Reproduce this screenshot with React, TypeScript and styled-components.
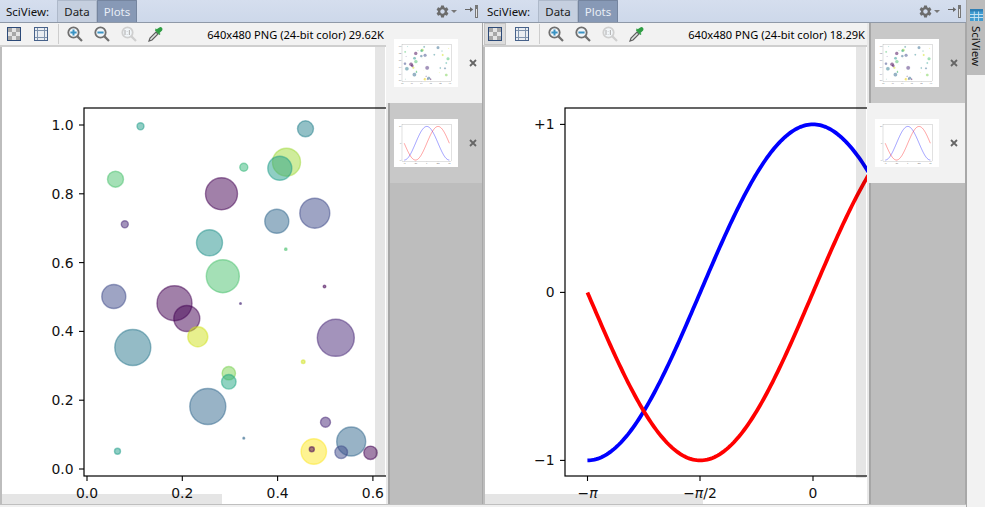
import styled, { createGlobalStyle } from "styled-components";
import { MdSettings } from "react-icons/md";

const GlobalStyle = createGlobalStyle`
  html, body {
    margin: 0;
    height: 100%;
    overflow: hidden;
    background: #f2f2f2;
  }
`;

const Page = styled.div`
  display: flex;
  width: 985px;
  height: 507px;
  overflow: hidden;
  font-family: "Noto Sans", "Open Sans", sans-serif;
  font-size: 11.5px;
  color: #111;
`;

const Panel = styled.section`
  display: flex;
  flex-direction: column;
  width: 483px;
  height: 507px;
  flex-shrink: 0;
`;

const Header = styled.header<{ $start: number }>`
  display: flex;
  align-items: stretch;
  height: 22px;
  padding-left: ${(props) => props.$start}px;
  background: linear-gradient(#d5deee, #cdd8ea);
  border-bottom: 1px solid #8f99a8;
`;

const HeaderLabel = styled.span`
  align-self: center;
  width: 51px;
  font-size: 11.5px;
  white-space: nowrap;
`;

const Tab = styled.div<{ $active?: boolean }>`
  display: flex;
  align-items: center;
  justify-content: center;
  width: 38px;
  color: ${(props) => (props.$active ? "#e9eef6" : "#1c1c1c")};
  background: ${(props) => (props.$active ? "#8799b6" : "#c5cfdf")};
  border: 1px solid ${(props) => (props.$active ? "#75859f" : "#aeb9ca")};
  border-bottom: none;
  border-radius: 1px 1px 0 0;
`;

const HeaderTools = styled.div`
  display: flex;
  align-items: center;
  gap: 8px;
  margin-left: auto;
  padding-right: 5px;
`;

const GearButton = styled.div`
  display: flex;
  align-items: center;
  gap: 1px;
  color: #6c6c6c;
`;

const Caret = styled.span`
  width: 0;
  height: 0;
  border-left: 3px solid transparent;
  border-right: 3px solid transparent;
  border-top: 3px solid #777;
`;

const Body = styled.div`
  display: flex;
  flex: 1;
  min-height: 0;
`;

const ViewColumn = styled.div`
  display: flex;
  flex-direction: column;
  flex: 1;
  min-width: 0;
`;

const Toolbar = styled.div<{ $start: number }>`
  display: flex;
  align-items: center;
  gap: 5px;
  height: 22px;
  padding-left: ${(props) => props.$start}px;
  padding-right: 2px;
  background: #f2f2f2;
  border-bottom: 2px solid #cfcfcf;
`;

const ToolButton = styled.div<{ $active?: boolean }>`
  display: flex;
  align-items: center;
  justify-content: center;
  width: 20px;
  height: 20px;
  background: ${(props) => (props.$active ? "#dcdcdc" : "transparent")};
  border: 1px solid ${(props) => (props.$active ? "#c4c4c4" : "transparent")};
`;

const ToolDivider = styled.span`
  width: 1px;
  height: 20px;
  margin: 0 0.5px;
  background: #cdcdcd;
`;

const ImageInfo = styled.span`
  margin-left: auto;
  font-size: 11.1px;
  color: #000;
  white-space: nowrap;
`;

const Viewer = styled.div`
  position: relative;
  flex: 1;
  min-height: 0;
  overflow: hidden;
  background: #fff;
  border-left: 2px solid #bdbdbd;
`;

const PlotFrame = styled.div<{ $left: number }>`
  margin-top: 2.5px;
  margin-left: ${(props) => props.$left}px;
`;

const VerticalScroll = styled.div<{ $height: number }>`
  position: absolute;
  top: 0;
  right: 1px;
  width: 10px;
  height: ${(props) => props.$height}px;
  background: rgba(0, 0, 0, 0.1);
`;

const HorizontalScroll = styled.div<{ $width: number }>`
  position: absolute;
  left: 0;
  bottom: 0;
  width: ${(props) => props.$width}px;
  height: 10px;
  background: rgba(0, 0, 0, 0.1);
`;

const ThumbColumn = styled.aside<{ $width: number }>`
  display: flex;
  flex-direction: column;
  width: ${(props) => props.$width}px;
  flex-shrink: 0;
  border-right: 1px solid #a8a8a8;
  box-sizing: border-box;
`;

const ThumbRow = styled.div<{ $active?: boolean }>`
  display: flex;
  align-items: center;
  gap: 11px;
  height: 80px;
  box-sizing: border-box;
  padding-left: ${(props) => (props.$active ? 8 : 6)}px;
  background: ${(props) => (props.$active ? "#f2f2f2" : "#c8c8c8")};
  border-left: ${(props) => (props.$active ? "none" : "2px solid #e8e8e8")};
  box-shadow: ${(props) => (props.$active ? "none" : "inset 2px 0 #a6a6a6")};
`;

const ThumbFiller = styled.div`
  flex: 1;
  background: #bdbdbd;
  border-left: 2px solid #e8e8e8;
  box-shadow: inset 2px 0 #a6a6a6;
`;

const ThumbImage = styled.div`
  display: flex;
  width: 64px;
  height: 48px;
  background: #fff;
`;

const BottomEdge = styled.div`
  height: 2px;
  background: #f0f0f0;
  border-top: 1px solid #bfbfbf;
`;

const SideStripe = styled.aside`
  display: flex;
  flex-direction: column;
  flex: 1;
  background: #f2f2f2;
  border-left: 1px solid #a8a8a8;
`;

const StripeButton = styled.div`
  display: flex;
  flex-direction: column;
  align-items: center;
  gap: 5px;
  height: 75px;
  padding-top: 9px;
  box-sizing: border-box;
  background: #bcbcbc;
`;

const StripeLabel = styled.span`
  writing-mode: vertical-rl;
  font-size: 11.5px;
  line-height: 14px;
`;

const PlotSvg = styled.svg`
  display: block;
  overflow: hidden;
  font-family: "DejaVu Sans", sans-serif;
  font-size: 13.9px;
`;

type Bubble = [number, number, number, string];

const bubbles: Bubble[] = [
  [136.5, 76.2, 3.5, "#1f9e89"],
  [301.5, 78.8, 8, "#26828e"],
  [282.5, 112.2, 14, "#a0da39"],
  [275.8, 118.2, 12, "#1f9e89"],
  [239.8, 117.2, 4, "#35b779"],
  [111.5, 129.2, 8, "#4ac16d"],
  [217.5, 143.8, 16, "#440154"],
  [310.8, 163.2, 15, "#3e4989"],
  [272.8, 171.2, 12, "#31688e"],
  [120.8, 174.2, 3.5, "#482878"],
  [205.5, 192.8, 13, "#21918c"],
  [281.8, 199.2, 1.2, "#4ac16d"],
  [218.8, 226.2, 16.5, "#4ac16d"],
  [320.5, 236.5, 1.3, "#440154"],
  [109.8, 246.5, 12, "#3e4989"],
  [170.5, 253.2, 17.5, "#440154"],
  [182.8, 268.5, 13, "#440154"],
  [193.8, 286.8, 10, "#d0e11c"],
  [236.5, 253.5, 0.9, "#482878"],
  [331.8, 287.8, 18.5, "#482878"],
  [128.8, 297.5, 18, "#2a788e"],
  [299.2, 311.8, 1.8, "#d0e11c"],
  [224.8, 323.2, 6.7, "#7ad151"],
  [224.8, 331.8, 7.3, "#22a884"],
  [203.8, 356.5, 18, "#31688e"],
  [321.5, 372.2, 5, "#482878"],
  [239.8, 388.2, 0.9, "#31688e"],
  [347.2, 391.5, 14.5, "#31688e"],
  [113.5, 401.2, 3, "#1f9e89"],
  [309.8, 401.5, 12.7, "#fde725"],
  [307.8, 399.2, 2.5, "#440154"],
  [337.2, 402.2, 6.3, "#3e4989"],
  [366.5, 402.8, 6.7, "#440154"],
  // off to the right of the viewer, only the thumbnails show these
  [440, 87, 14, "#31688e"],
  [480, 120, 5, "#1f9e89"],
  [547, 93, 4, "#d0e11c"],
  [403, 157, 8, "#26828e"],
  [487, 160, 9, "#d0e11c"],
  [540, 197, 15, "#4ac16d"],
  [523, 240, 8, "#1f9e89"],
  [463, 290, 7, "#26828e"],
  [510, 293, 9, "#31688e"],
  [523, 360, 13, "#7ad151"],
  [453, 337, 3, "#d0e11c"],
];

const AXES = { left: 80, right: 576, top: 58, bottom: 426 };

const Spines = () => (
  <rect
    x={AXES.left}
    y={AXES.top}
    width={AXES.right - AXES.left}
    height={AXES.bottom - AXES.top}
    fill="none"
    stroke="#000"
    strokeWidth={1.2}
  />
);

const XTick = ({ x, children }: { x: number; children: React.ReactNode }) => (
  <>
    <line x1={x} x2={x} y1={AXES.bottom} y2={AXES.bottom + 5} stroke="#000" strokeWidth={1.1} />
    <text x={x} y={447.5} textAnchor="middle" fill="#111">
      {children}
    </text>
  </>
);

const YTick = ({ y, children }: { y: number; children: React.ReactNode }) => (
  <>
    <line x1={AXES.left - 5} x2={AXES.left} y1={y} y2={y} stroke="#000" strokeWidth={1.1} />
    <text x={69.5} y={y + 5} textAnchor="end" fill="#111">
      {children}
    </text>
  </>
);

const ScatterPlot = ({ width = 640 }: { width?: number }) => (
  <PlotSvg width={width} height={(width * 3) / 4} viewBox="0 0 640 480">
    {bubbles.map(([x, y, r, color]) => (
      <circle
        key={`${x}-${y}`}
        cx={x}
        cy={y}
        r={r}
        fill={color}
        fillOpacity={0.5}
        stroke={color}
        strokeOpacity={0.5}
        strokeWidth={1.4}
      />
    ))}
    <Spines />
    {[0, 0.2, 0.4, 0.6, 0.8, 1].map((v) => (
      <XTick key={v} x={83 + v * 476.5}>
        {v.toFixed(1)}
      </XTick>
    ))}
    {[0, 0.2, 0.4, 0.6, 0.8, 1].map((v) => (
      <YTick key={v} y={419 - v * 344}>
        {v.toFixed(1)}
      </YTick>
    ))}
  </PlotSvg>
);

const curvePath = (fn: (v: number) => number) => {
  const points: string[] = [];
  for (let i = 0; i <= 256; i++) {
    const v = -Math.PI + (i / 256) * 2 * Math.PI;
    points.push(`${(328 + v * 71.8).toFixed(2)},${(242.4 - fn(v) * 168).toFixed(2)}`);
  }
  return `M${points.join("L")}`;
};

const Pi = () => <tspan fontStyle="italic">π</tspan>;

const CurvePlot = ({ width = 640 }: { width?: number }) => (
  <PlotSvg width={width} height={(width * 3) / 4} viewBox="0 0 640 480">
    <path d={curvePath(Math.cos)} fill="none" stroke="#0000ff" strokeWidth={3.8} />
    <path d={curvePath(Math.sin)} fill="none" stroke="#ff0000" strokeWidth={3.8} />
    <Spines />
    <XTick x={102.5}>
      −<Pi />
    </XTick>
    <XTick x={215}>
      −<Pi />/2
    </XTick>
    <XTick x={328}>0</XTick>
    <XTick x={440.8}>
      +<Pi />/2
    </XTick>
    <XTick x={553.5}>
      +<Pi />
    </XTick>
    <YTick y={74.4}>+1</YTick>
    <YTick y={242.4}>0</YTick>
    <YTick y={410.4}>−1</YTick>
  </PlotSvg>
);

const CheckerIcon = () => (
  <svg width="14" height="14" viewBox="0 0 14 14">
    <rect width="14" height="14" fill="#e4e4e4" />
    <path d="M1 1h4v4H1zM9 1h4v4H9zM5 5h4v4H5zM1 9h4v4H1zM9 9h4v4H9z" fill="#a8a8a8" />
    <rect x="0.5" y="0.5" width="13" height="13" fill="none" stroke="#2c4a78" />
  </svg>
);

const FrameIcon = () => (
  <svg width="14" height="14" viewBox="0 0 14 14">
    <rect width="14" height="14" fill="#e9edf2" />
    <path d="M3.5 1v12M10.5 1v12M1 3.5h12M1 10.5h12" stroke="#7f93ad" fill="none" />
    <rect x="0.5" y="0.5" width="13" height="13" fill="none" stroke="#46618a" />
  </svg>
);

const LensIcon = ({ kind }: { kind: "in" | "out" | "actual" }) => {
  const muted = kind === "actual";
  const ring = muted ? "#cfcfcf" : "#6f6f6f";
  return (
    <svg width="16" height="16" viewBox="0 0 16 16">
      <circle cx="6.5" cy="6.5" r="5.2" fill="#f2f6f9" stroke={ring} strokeWidth="1.8" />
      <path d="M10.4 10.4L15 15" stroke={ring} strokeWidth="2.2" />
      {kind === "in" && <path d="M6.5 3.4v6.2M3.4 6.5h6.2" stroke="#3a93c4" strokeWidth="2" />}
      {kind === "out" && <path d="M3.4 6.5h6.2" stroke="#3a93c4" strokeWidth="2" />}
      {muted && <path d="M4 4v5M6.2 5v.5M6.2 8v.5M8.4 4v5" stroke="#b8b8b8" strokeWidth="1.2" />}
    </svg>
  );
};

const DropperIcon = () => (
  <svg width="16" height="16" viewBox="0 0 16 16">
    <path d="M1 15l1-3 6-6 2 2-6 6z" fill="#dfe5e3" stroke="#5f5f5f" strokeWidth="1.2" />
    <path d="M7 4.5l4.5 4.5 1-1-1-1 2.6-2.6a2 2 0 0 0-2.8-2.8L8.7 3.2l-1-1z" fill="#2f9e44" />
  </svg>
);

const PinIcon = () => (
  <svg width="13" height="13" viewBox="0 0 13 13">
    <path d="M0 4.5h6.5" stroke="#666" strokeWidth="1" />
    <path d="M5 2l3.2 2.5L5 7z" fill="#666" />
    <rect x="10" y="0" width="3" height="13" fill="#777" />
    <rect x="11" y="4" width="1" height="8" fill="#e4e4e4" />
  </svg>
);

const CloseIcon = () => (
  <svg width="8" height="8" viewBox="0 0 8 8">
    <path d="M1 1l6 6M7 1l-6 6" stroke="#666" strokeWidth="1.8" />
  </svg>
);

const SciViewIcon = () => (
  <svg width="13" height="12" viewBox="0 0 13 12">
    <rect width="13" height="12" fill="#3f9bd0" />
    <rect width="13" height="2.5" fill="#2f7fb4" />
    <path d="M4.3 2.5v9.5M8.6 2.5v9.5M0 5.5h13M0 8.5h13" stroke="#cfe6f3" strokeWidth="0.9" />
  </svg>
);

type PlotPanelProps = {
  start: number;
  toolStart: number;
  info: string;
  thumbWidth: number;
  plotLeft: number;
  scrollHeight: number;
  scrollWidth: number;
  selected: number;
  checkerActive?: boolean;
};

const PlotPanel = ({
  start,
  toolStart,
  info,
  thumbWidth,
  plotLeft,
  scrollHeight,
  scrollWidth,
  selected,
  checkerActive,
}: PlotPanelProps) => (
  <Panel>
    <Header $start={start}>
      <HeaderLabel>SciView:</HeaderLabel>
      <Tab>Data</Tab>
      <Tab $active>Plots</Tab>
      <HeaderTools>
        <GearButton>
          <MdSettings size={15} />
          <Caret />
        </GearButton>
        <PinIcon />
      </HeaderTools>
    </Header>
    <Body>
      <ViewColumn>
        <Toolbar $start={toolStart}>
          <ToolButton $active={checkerActive}>
            <CheckerIcon />
          </ToolButton>
          <ToolButton>
            <FrameIcon />
          </ToolButton>
          <ToolDivider />
          <ToolButton>
            <LensIcon kind="in" />
          </ToolButton>
          <ToolButton>
            <LensIcon kind="out" />
          </ToolButton>
          <ToolButton>
            <LensIcon kind="actual" />
          </ToolButton>
          <ToolButton>
            <DropperIcon />
          </ToolButton>
          <ImageInfo>{info}</ImageInfo>
        </Toolbar>
        <Viewer>
          <PlotFrame $left={plotLeft}>
            {selected === 0 ? <ScatterPlot /> : <CurvePlot />}
          </PlotFrame>
          <VerticalScroll $height={scrollHeight} />
          <HorizontalScroll $width={scrollWidth} />
        </Viewer>
      </ViewColumn>
      <ThumbColumn $width={thumbWidth}>
        <ThumbRow $active={selected === 0}>
          <ThumbImage>
            <ScatterPlot width={64} />
          </ThumbImage>
          <CloseIcon />
        </ThumbRow>
        <ThumbRow $active={selected === 1}>
          <ThumbImage>
            <CurvePlot width={64} />
          </ThumbImage>
          <CloseIcon />
        </ThumbRow>
        <ThumbFiller />
      </ThumbColumn>
    </Body>
    <BottomEdge />
  </Panel>
);

export default function App() {
  return (
    <Page>
      <GlobalStyle />
      <PlotPanel
        start={6}
        toolStart={3}
        info="640x480 PNG (24-bit color) 29.62K"
        thumbWidth={97}
        plotLeft={1.5}
        scrollHeight={429}
        scrollWidth={220}
        selected={0}
      />
      <PlotPanel
        start={4}
        toolStart={1}
        info="640x480 PNG (24-bit color) 18.29K"
        thumbWidth={99}
        plotLeft={-0.5}
        scrollHeight={431}
        scrollWidth={218}
        selected={1}
        checkerActive
      />
      <SideStripe>
        <StripeButton>
          <SciViewIcon />
          <StripeLabel>SciView</StripeLabel>
        </StripeButton>
      </SideStripe>
    </Page>
  );
}
